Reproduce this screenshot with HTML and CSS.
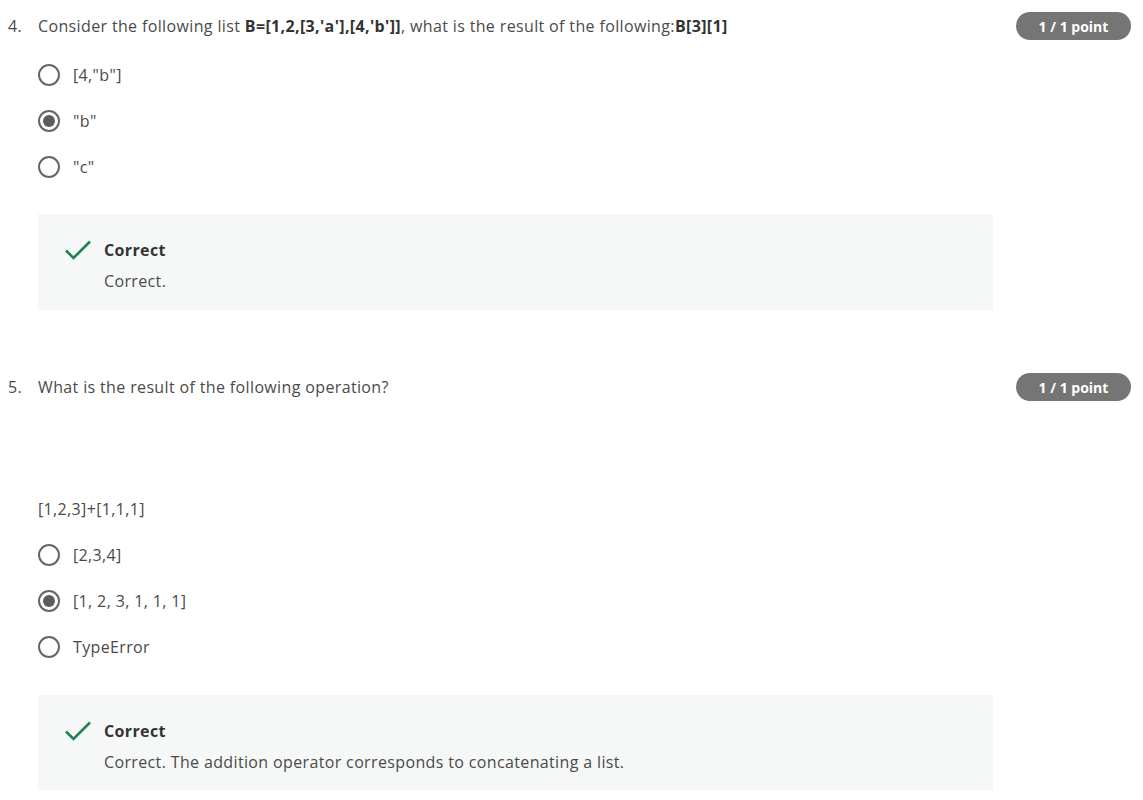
FILE: index.html
```html
<!DOCTYPE html>
<html>
<head>
<meta charset="utf-8">
<link rel="stylesheet" href="styles.css">
</head>
<body>
<div class="page">
  <section class="question q4">
    <div class="q-head">
      <span class="q-num">4.</span>
      <div class="q-text">Consider the following list <strong>B=[1,2,[3,'a'],[4,'b']]</strong>, what is the result of the following:<strong>B[3][1]</strong></div>
      <span class="pill">1 / 1 point</span>
    </div>
    <ul class="options">
      <li class="option"><span class="radio"></span><span>[4,"b"]</span></li>
      <li class="option"><span class="radio checked"></span><span>"b"</span></li>
      <li class="option"><span class="radio"></span><span>"c"</span></li>
    </ul>
    <div class="feedback">
      <svg class="check" width="28" height="22" viewBox="0 0 28 22"><path d="M2 11.5 L9.5 19 L26 2.5" fill="none" stroke="#1f8354" stroke-width="2.6"/></svg>
      <div class="fb-body">
        <div class="fb-title">Correct</div>
        <div class="fb-text">Correct.</div>
      </div>
    </div>
  </section>

  <section class="question q5">
    <div class="q-head">
      <span class="q-num">5.</span>
      <div class="q-text">What is the result of the following operation?</div>
      <span class="pill">1 / 1 point</span>
    </div>
    <div class="code-line">[1,2,3]+[1,1,1]</div>
    <ul class="options">
      <li class="option"><span class="radio"></span><span>[2,3,4]</span></li>
      <li class="option"><span class="radio checked"></span><span>[1, 2, 3, 1, 1, 1]</span></li>
      <li class="option"><span class="radio"></span><span>TypeError</span></li>
    </ul>
    <div class="feedback">
      <svg class="check" width="28" height="22" viewBox="0 0 28 22"><path d="M2 11.5 L9.5 19 L26 2.5" fill="none" stroke="#1f8354" stroke-width="2.6"/></svg>
      <div class="fb-body">
        <div class="fb-title">Correct</div>
        <div class="fb-text">Correct. The addition operator corresponds to concatenating a list.</div>
      </div>
    </div>
  </section>
</div>
</body>
</html>
```
FILE: styles.css
```css
html, body {
  margin: 0;
  padding: 0;
  background: #ffffff;
}
body {
  font-family: "Open Sans", "Liberation Sans", sans-serif;
  font-size: 16px;
  color: #4a4a4a;
  letter-spacing: 0.36px;
}
.page {
  padding: 12px 12px 0 8px;
}
.question {
  display: flex;
  flex-direction: column;
}
.q5 {
  margin-top: 63px;
}
.q-head {
  display: flex;
  align-items: center;
  height: 28px;
}
.q-num {
  width: 30px;
  flex: none;
}
.q-text {
  flex: 1;
  line-height: 24px;
}
.q-text strong {
  font-weight: 700;
  color: #333333;
}
.pill {
  flex: none;
  width: 115px;
  height: 28px;
  border-radius: 14px;
  background: #757575;
  color: #ffffff;
  font-size: 14px;
  font-weight: 700;
  letter-spacing: 0;
  display: flex;
  align-items: center;
  justify-content: center;
}
.options {
  list-style: none;
  margin: 12px 0 0 30px;
  padding: 0;
}
.option {
  height: 46px;
  display: flex;
  align-items: center;
  gap: 13px;
}
.radio {
  box-sizing: border-box;
  width: 22px;
  height: 22px;
  border: 2px solid #666666;
  border-radius: 50%;
  display: flex;
  align-items: center;
  justify-content: center;
  flex: none;
}
.radio.checked::after {
  content: "";
  width: 12px;
  height: 12px;
  border-radius: 50%;
  background: #5c5c5c;
}
.code-line {
  margin: 96px 0 0 30px;
  line-height: 24px;
}
.q5 .options {
  margin-top: 11px;
}
.feedback {
  margin: 24px 0 0 30px;
  width: 955px;
  height: 96px;
  box-sizing: border-box;
  background: #f5f8f7;
  display: flex;
  padding: 24px 0 0 26px;
  gap: 12px;
}
.check {
  flex: none;
  margin-top: 1px;
}
.fb-title {
  font-weight: 700;
  color: #333333;
  line-height: 24px;
}
.fb-text {
  margin-top: 7px;
  line-height: 24px;
}
.q5 .feedback {
  margin-top: 25px;
  height: 95px;
}
```
